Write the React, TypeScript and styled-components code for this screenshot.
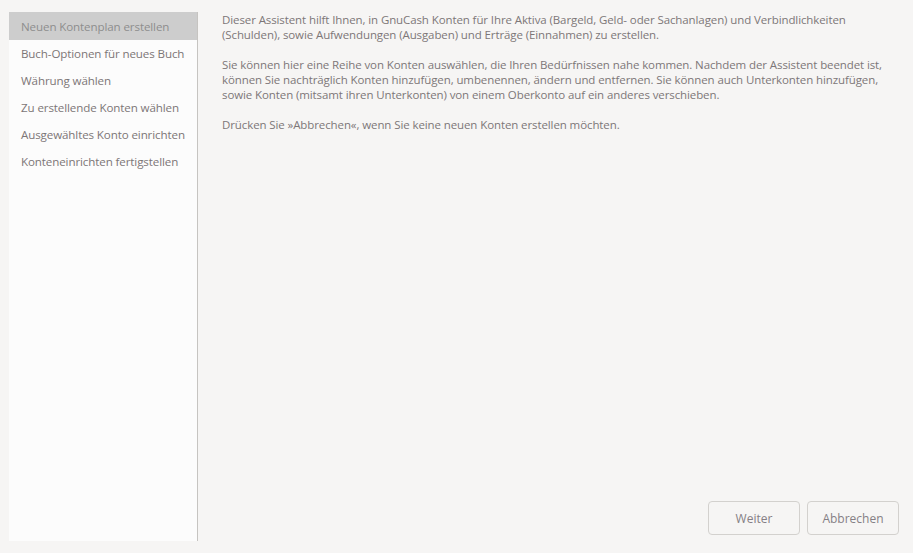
import React from "react";
import styled, { createGlobalStyle } from "styled-components";

const Global = createGlobalStyle`
  html, body { margin: 0; padding: 0; background: #f6f5f4; }
  body { font-family: "Open Sans", "Liberation Sans", sans-serif; }
`;

const Window = styled.div`
  width: 913px;
  height: 553px;
  box-sizing: border-box;
  padding: 12px 0 12px 9px;
  display: flex;
  background: #f6f5f4;
  font-family: "Open Sans", "Liberation Sans", sans-serif;
`;

const Sidebar = styled.nav`
  width: 188px;
  flex: none;
  background: #fcfcfc;
  border-right: 1px solid #c6c4c1;
  display: flex;
  flex-direction: column;
`;

const Step = styled.div<{ $active?: boolean }>`
  height: 27px;
  display: flex;
  align-items: center;
  padding-left: 12px;
  font-size: 11.6px;
  letter-spacing: -0.12px;
  color: ${(p) => (p.$active ? "#8e8e8e" : "#7c7677")};
  background: ${(p) => (p.$active ? "#cdcdcd" : "transparent")};
  white-space: nowrap;
  &:first-child { height: 28px; }
`;

const Main = styled.div`
  flex: 1;
  display: flex;
  flex-direction: column;
  padding: 0 14px 6px 24px;
`;

const Para = styled.p`
  margin: 0 0 15px 0;
  font-size: 11.5px;
  line-height: 15px;
  letter-spacing: -0.1px;
  color: #7d7778;
  white-space: nowrap;
`;

const Spacer = styled.div`
  flex: 1;
`;

const Buttons = styled.div`
  display: flex;
  justify-content: flex-end;
  gap: 7px;
`;

const Button = styled.button`
  width: 92px;
  height: 34px;
  border: 1px solid #d3d1ce;
  border-radius: 4px;
  background: #f6f5f4;
  font-family: "Open Sans", "Liberation Sans", sans-serif;
  font-size: 12px;
  color: #857f85;
  padding: 0;
`;

const steps = [
  "Neuen Kontenplan erstellen",
  "Buch-Optionen für neues Buch",
  "Währung wählen",
  "Zu erstellende Konten wählen",
  "Ausgewähltes Konto einrichten",
  "Konteneinrichten fertigstellen",
];

export default function App() {
  return (
    <>
      <Global />
      <Window>
        <Sidebar>
          {steps.map((s, i) => (
            <Step key={s} $active={i === 0}>
              {s}
            </Step>
          ))}
        </Sidebar>
        <Main>
          <Para>
            Dieser Assistent hilft Ihnen, in GnuCash Konten für Ihre Aktiva (Bargeld, Geld- oder Sachanlagen) und Verbindlichkeiten
            <br />
            (Schulden), sowie Aufwendungen (Ausgaben) und Erträge (Einnahmen) zu erstellen.
          </Para>
          <Para>
            Sie können hier eine Reihe von Konten auswählen, die Ihren Bedürfnissen nahe kommen. Nachdem der Assistent beendet ist,
            <br />
            können Sie nachträglich Konten hinzufügen, umbenennen, ändern und entfernen. Sie können auch Unterkonten hinzufügen,
            <br />
            sowie Konten (mitsamt ihren Unterkonten) von einem Oberkonto auf ein anderes verschieben.
          </Para>
          <Para>Drücken Sie »Abbrechen«, wenn Sie keine neuen Konten erstellen möchten.</Para>
          <Spacer />
          <Buttons>
            <Button>Weiter</Button>
            <Button>Abbrechen</Button>
          </Buttons>
        </Main>
      </Window>
    </>
  );
}
